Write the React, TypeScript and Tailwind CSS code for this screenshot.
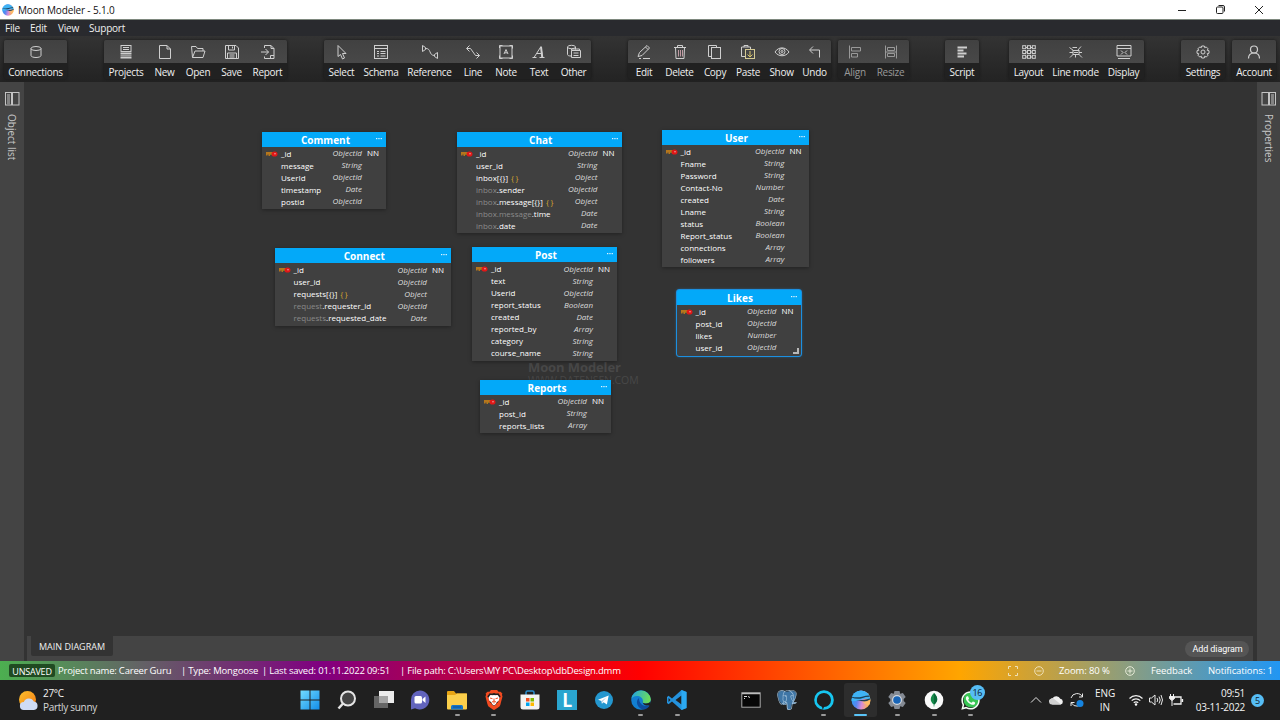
import React from "react";
import { SiPostgresql, SiBrave } from "react-icons/si";
import { FaWhatsapp } from "react-icons/fa";

type Tool = { label: string; w: string; icon: React.ReactNode };

const Ico = ({ children, size = 16 }: { children: React.ReactNode; size?: number }) => (
  <svg width={size} height={size} viewBox="0 0 16 16" fill="none" stroke="#cfcfcf" strokeWidth="1">
    {children}
  </svg>
);

const dbIcon = (
  <Ico>
    <ellipse cx="8" cy="4.5" rx="5" ry="2" />
    <path d="M3 4.5v7c0 1.1 2.2 2 5 2s5-.9 5-2v-7" />
  </Ico>
);
const projectsIcon = (
  <Ico>
    <rect x="3" y="1.500" width="10" height="6" />
    <path d="M5 3.500h6M5 5.500h6" />
    <path d="M2.500 9.500h11M2.500 13.500h11" strokeWidth="2" />
    <path d="M2.500 11.500h11" stroke="#999" />
  </Ico>
);
const newIcon = (
  <Ico>
    <path d="M2.500 1.500h7.500l3.500 3.500v9.500h-11z" />
    <path d="M10 1.500V5h3.500" />
  </Ico>
);
const openIcon = (
  <Ico>
    <path d="M2.500 13.500l-1-11h4.500l1.500 2h5.500v2.500M2.500 13.500l2.500-6.500h10l-2 6.500z" />
  </Ico>
);
const saveIcon = (
  <Ico>
    <path d="M1.500 1.500h10.500l2.500 2.500v10.500h-13zM4.500 1.500v4.500h6v-4.500M8.500 2.500v2M3.500 14.500v-5.500h9v5.500M5.500 11h5M5.500 13h5" />
  </Ico>
);
const reportIcon = (
  <Ico>
    <path d="M4.500 4v-2.500h6.500l3 3v10h-9.500v-2M11 1.500v3h3M1 8h7.500M5.500 5l3 3-3 3M10.500 11.500h3.500M10.500 11.500v3" />
  </Ico>
);
const selectIcon = (
  <Ico>
    <path d="M4 1.500v11l2.500-2 2 4.500 2-1-2-4.500h3.500z" />
  </Ico>
);
const schemaIcon = (
  <Ico>
    <rect x="1.500" y="1.500" width="13" height="13" />
    <path d="M1.500 4.500h13M4 7.500h2M7.500 7.500h5M4 9.500h2M7.500 9.500h5M4 12h2M7.500 12h5" />
  </Ico>
);
const referenceIcon = (
  <svg width="20" height="16" viewBox="0 0 20 16" fill="none" stroke="#cfcfcf">
    <path d="M2.500 1.500v6l3-2v-2zM5.500 4.500c6-.5 3 7 9 7M17.500 14.500v-6l-3 2v2z" />
  </svg>
);
const lineIcon = (
  <Ico>
    <path d="M4.500 1.500l-3 3 3 3M2 4.500h3.500l5 7h4M11.500 8.500l3 3-3 3" />
  </Ico>
);
const noteIcon = (
  <Ico>
    <rect x="2" y="2" width="12" height="12" />
    <path d="M1.500 4v-2.500h3M11.500 1.500h3v3M14.500 11.500v3h-3M4.500 14.500h-3v-3" />
    <path d="M6 10l2-4.500 2 4.500M6.800 8.800h2.400" />
  </Ico>
);
const textIcon = (
  <Ico>
    <path d="M1.500 13.500h4M8.500 13.500h5M3 13.500l7-11 1.500 11M5.800 9.500h5" />
    <path d="M10 3l1.200 10" strokeWidth="2" />
  </Ico>
);
const otherIcon = (
  <Ico>
    <ellipse cx="5.500" cy="3" rx="4" ry="1.700" />
    <path d="M1.500 3v7.500c0 1 1.500 1.500 3.500 1.500M9.500 3v2.500" />
    <path d="M5.500 6.500h9v7h-9zM5.500 6.500v-1.500h8v1.500M7.500 9h5M7.500 11.500h5" />
  </Ico>
);
const editIcon = (
  <Ico>
    <path d="M2 12.500l1.500-4 7.500-7 2.500 2.500-7.500 7.500zM9.500 3l2.500 2.500M3 14.500h2M7 14.500h7" />
  </Ico>
);
const deleteIcon = (
  <Ico>
    <path d="M2 3.500h12M5.500 3.500v-2h5v2M3.500 3.500l.5 11h8l.5-11" />
    <path d="M6.500 6v6.500M8.500 6v6.500M10.500 6v6.500" stroke="#bf9aa2" />
  </Ico>
);
const copyIcon = (
  <Ico>
    <path d="M4.500 12.500h-3v-11h8v2" />
    <rect x="4.500" y="3.500" width="9" height="11" />
  </Ico>
);
const pasteIcon = (
  <Ico>
    <path d="M5 12.500h-3.500v-9.500h9v2M4 3v-1.500h4v1.500" />
    <rect x="5.500" y="5.500" width="9" height="9" stroke="#d3c993" />
    <path d="M10 7v6M7.500 10.500l2.500 2.500 2.500-2.500" stroke="#d9c66b" />
  </Ico>
);
const showIcon = (
  <Ico>
    <path d="M1 8c3.500-5.500 10.500-5.500 14 0-3.500 5-10.500 5-14 0z" />
    <circle cx="8" cy="7.500" r="3" />
    <circle cx="8" cy="7.500" r="1" />
  </Ico>
);
const undoIcon = (
  <Ico>
    <path d="M6 2.500l-3.500 3.500 3.500 3.500M3 6h9.500v7.500" />
  </Ico>
);
const alignIcon = (
  <Ico>
    <path d="M2.500 1.500v13M4.500 3.500h9v3.500h-9zM4.500 9.500h6v3.500h-6z" stroke="#999" />
  </Ico>
);
const resizeIcon = (
  <Ico>
    <path d="M2.500 1.500v13M13.500 1.500v13M4.500 3.500h7v3h-7zM4.500 9.500h7v3h-7zM2 8h12" stroke="#999" />
  </Ico>
);
const scriptIcon = (
  <Ico>
    <path d="M3.500 3.500h9.500M3.500 6.500h6M3.500 9.500h9M3.500 12.500h6.500" strokeWidth="2" />
  </Ico>
);
const layoutIcon = (
  <Ico>
    {[1.7, 6.5, 11.3].map((y) =>
      [1.7, 6.5, 11.3].map((x) => <rect key={`${x}-${y}`} x={x} y={y} width="3" height="3" />)
    )}
    <path d="M5 3.500h1.500M9.500 3.500h2M5 8h1.500M9.500 8h2M5 13h1.500M9.500 13h2" />
  </Ico>
);
const lineModeIcon = (
  <Ico>
    <rect x="5" y="6.500" width="6" height="4" />
    <path d="M1.500 3.500l4 3M4.500 3.500h4.500M9.500 6.500l3.500-4M1.500 8.500h3.500M11 8.500h3M5 10.500l-3 3M7.500 10.500v3M11 10.500l3 3M6 8.500h4" />
  </Ico>
);
const displayIcon = (
  <Ico>
    <path d="M1 1.500h14v10.500h-14zM1 4.500h14M2 14.500h12M5 6.500l2 2-2 2M11 6.500l-2 2 2 2" />
  </Ico>
);
const settingsIcon = (
  <Ico>
    <path d="M6.700 2h2.600l.4 1.700 1.500-.8 1.900 1.900-.9 1.500 1.800.4v2.600l-1.800.4.9 1.500-1.900 1.900-1.500-.9-.4 1.800h-2.600l-.4-1.800-1.500.9-1.900-1.900.9-1.500-1.800-.4v-2.600l1.800-.4-.9-1.500 1.900-1.900 1.500.8z" />
    <circle cx="8" cy="8" r="2" />
  </Ico>
);
const accountIcon = (
  <Ico>
    <circle cx="8" cy="5.500" r="3.500" strokeWidth="1.200" />
    <path d="M2.500 14.500c0-4 2-5.500 5.500-5.500s5.500 1.500 5.500 5.500" strokeWidth="1.200" />
  </Ico>
);

const Group = ({ tools, className = "", dim = false }: { tools: Tool[]; className?: string; dim?: boolean }) => (
  <div className={`flex h-[39px] rounded-[2px] overflow-hidden shadow-[0_0_3px_#151515] ${className}`}>
    {tools.map((t) => (
      <div key={t.label} className={`flex flex-col ${t.w}`}>
        <div className="h-[23px] flex items-center justify-center bg-linear-to-b from-[#414141] to-[#484848]">{t.icon}</div>
        <div
          className={`h-4 flex items-center justify-center bg-[#212121] text-[10px] tracking-[-0.3px] leading-none whitespace-nowrap pt-[2px] ${
            dim ? "text-[#999]" : "text-[#f0f0f0]"
          }`}
        >
          {t.label}
        </div>
      </div>
    ))}
  </div>
);

type Row = [string, string, string];
type Table = { name: string; pos: string; rows: Row[]; selected?: boolean };

const tables: Table[] = [
  {
    name: "Comment",
    pos: "left-[238px] top-[49.5px] w-[124px] h-[77.5px]",
    rows: [["", "_id", "ObjectId"], ["", "message", "String"], ["", "UserId", "ObjectId"], ["", "timestamp", "Date"], ["", "postid", "ObjectId"]],
  },
  {
    name: "Chat",
    pos: "left-[433px] top-[49.5px] w-[164.5px] h-[101.5px]",
    rows: [
      ["", "_id", "ObjectId"],
      ["", "user_id", "String"],
      ["", "inbox[{}]", "Object"],
      ["inbox", ".sender", "ObjectId"],
      ["inbox", ".message[{}]", "Object"],
      ["inbox.message", ".time", "Date"],
      ["inbox", ".date", "Date"],
    ],
  },
  {
    name: "User",
    pos: "left-[637.5px] top-[47.5px] w-[147px] h-[137.5px]",
    rows: [
      ["", "_id", "ObjectId"],
      ["", "Fname", "String"],
      ["", "Password", "String"],
      ["", "Contact-No", "Number"],
      ["", "created", "Date"],
      ["", "Lname", "String"],
      ["", "status", "Boolean"],
      ["", "Report_status", "Boolean"],
      ["", "connections", "Array"],
      ["", "followers", "Array"],
    ],
  },
  {
    name: "Connect",
    pos: "left-[250.5px] top-[166px] w-[176.5px] h-[78px]",
    rows: [
      ["", "_id", "ObjectId"],
      ["", "user_id", "ObjectId"],
      ["", "requests[{}]", "Object"],
      ["request", ".requester_id", "ObjectId"],
      ["requests", ".requested_date", "Date"],
    ],
  },
  {
    name: "Post",
    pos: "left-[448px] top-[165px] w-[145px] h-[114px]",
    rows: [
      ["", "_id", "ObjectId"],
      ["", "text", "String"],
      ["", "Userid", "ObjectId"],
      ["", "report_status", "Boolean"],
      ["", "created", "Date"],
      ["", "reported_by", "Array"],
      ["", "category", "String"],
      ["", "course_name", "String"],
    ],
  },
  {
    name: "Likes",
    pos: "left-[652.5px] top-[207.5px] w-[124px] h-[66px]",
    selected: true,
    rows: [["", "_id", "ObjectId"], ["", "post_id", "ObjectId"], ["", "likes", "Number"], ["", "user_id", "ObjectId"]],
  },
  {
    name: "Reports",
    pos: "left-[456px] top-[297.5px] w-[131px] h-[53.5px]",
    rows: [["", "_id", "ObjectId"], ["", "post_id", "String"], ["", "reports_lists", "Array"]],
  },
];

const KeyIcon = () => (
  <svg width="12" height="6" viewBox="0 0 12 6">
    <path d="M0 1h7v2h-3v2h-1.500v-1.500h-1v1h-1.500z" fill="#b5761c" />
    <path d="M4 3h3v1h-3z" fill="#7c861e" />
    <ellipse cx="8.500" cy="3" rx="3" ry="2.600" fill="#e11717" />
    <circle cx="9" cy="2.700" r=".8" fill="#f0a0a0" />
  </svg>
);

const Dots = () => (
  <svg width="7" height="2" viewBox="0 0 7 2" fill="#dff3ff">
    <rect x="0" y="0" width="1.300" height="1.200" />
    <rect x="2.300" y="0" width="1.300" height="1.200" />
    <rect x="4.600" y="0" width="1.300" height="1.200" />
  </svg>
);

const TableNode = ({ t }: { t: Table }) => (
  <div
    className={`absolute ${t.pos} bg-[#404040] flex flex-col ${
      t.selected ? "rounded-[2px] outline-1 outline-[#1c8fe0] shadow-[0_0_3px_#1c8fe0]" : "shadow-[0_1px_4px_rgba(0,0,0,0.35)]"
    }`}
  >
    <div className="h-[15px] mb-px shrink-0 bg-[#03a9f9] flex items-center text-white font-bold text-[10px] leading-none">
      <span className="w-3" />
      <span className="flex-1 text-center pt-px pl-[2px]">{t.name}</span>
      <span className="w-[11px] pb-[1px] pl-[1px]">
        <Dots />
      </span>
    </div>
    {t.rows.map(([prefix, field, type], i) => (
      <div key={i} className="h-3 shrink-0 flex items-center text-[8px] leading-[12px] text-white whitespace-nowrap pr-[7px]">
        <span className="w-[19px] pl-1 shrink-0">{i === 0 && <KeyIcon />}</span>
        <span className="flex-1 w-0">
          <span className="text-[#8a8a8a]">{prefix}</span>
          {field}
          {field.includes("[{}]") && <span className="text-[#d9a62e] ml-[3px] tracking-[1.500px]">{"{}"}</span>}
        </span>
        <span className="italic text-[8px] text-[#dcdcdc] pb-px">{type}</span>
        <span className="w-[17px] text-right pb-px">{i === 0 ? "NN" : ""}</span>
      </div>
    ))}
    {t.selected && <span className="absolute right-[2px] bottom-[2px] w-[6px] h-[6px] border-r-2 border-b-2 border-[#b8b8b8]" />}
  </div>
);

const PanelIcon = ({ flip = false }: { flip?: boolean }) => (
  <svg width="15" height="14" viewBox="0 0 15 14" fill="none" stroke="#c4c4c4" className={flip ? "-scale-x-100" : ""}>
    <rect x=".5" y=".5" width="13.500" height="12.500" />
    <path d="M6.500 .5v12.500M7.500 .5v12.500M2 3h3M2 5h3M2 7h3M2 9h3M2 11h3" />
  </svg>
);

const MoonLogo = ({ id, size }: { id: string; size: number }) => (
  <svg width={size} height={size} viewBox="0 0 20 20">
    <defs>
      <linearGradient id={id} x1="0" y1=".55" x2="1" y2=".75">
        <stop offset="0" stopColor="#2a9df4" />
        <stop offset=".3" stopColor="#5b86f0" />
        <stop offset=".55" stopColor="#d98cd6" />
        <stop offset=".85" stopColor="#ffb257" />
      </linearGradient>
      <clipPath id={`${id}-clip`}>
        <circle cx="10" cy="10" r="9.500" />
      </clipPath>
    </defs>
    <g clipPath={`url(#${id}-clip)`}>
      <path d="M0 0h20v20H0z" fill={`url(#${id})`} />
      <path d="M0 0h20v9.500q-5-1.500-10 .3T0 11z" fill="#3fb3f5" />
      <path d="M0 6.500q6 1.600 11 .2t7-1.200l2 .3v1q-5-.2-9 1.400T0 7.600z" fill="#1d4058" />
      <path d="M5 10.200q7 .6 15-2v1.300q-5 3-8.500 1.800z" fill="#1d4058" />
      <path d="M11 11.500q4 .5 9-2.500l-1 6q-4 1-8-3.500z" fill="#ffc26b" opacity=".7" />
    </g>
  </svg>
);

const taskIcons: { icon: React.ReactNode; dot?: "on" | "active"; badge?: string }[] = [
  {
    icon: (
      <svg width="20" height="20" viewBox="0 0 20 20">
        <defs>
          <linearGradient id="win" x1="0" y1="0" x2="1" y2="1">
            <stop stopColor="#72dcff" />
            <stop offset="1" stopColor="#128ce8" />
          </linearGradient>
        </defs>
        <path d="M.5 .5h9v9h-9zM10.500 .5h9v9h-9zM.5 10.500h9v9h-9zM10.500 10.500h9v9h-9z" fill="url(#win)" />
      </svg>
    ),
  },
  {
    icon: (
      <svg width="20" height="20" viewBox="0 0 20 20" fill="#444" stroke="#e4e4e4" strokeWidth="2">
        <circle cx="11" cy="8.500" r="7" />
        <path d="M6 13.500l-4.500 5" strokeWidth="2.500" />
      </svg>
    ),
  },
  {
    icon: (
      <svg width="20" height="20" viewBox="0 0 20 20">
        <path d="M5 1h15v12h-15z" fill="#ececec" />
        <path d="M0 6h14v12h-14z" fill="#6d6d6d" opacity=".9" />
        <path d="M5 6h9v7h-9z" fill="#a5a5a5" />
      </svg>
    ),
  },
  {
    icon: (
      <svg width="20" height="20" viewBox="0 0 20 20">
        <path d="M10 .5a9.500 9.500 0 1 1-5 17.700l-4 1.300v-9.500a9.200 9.200 0 0 1 9-9.500z" fill="#6264bd" />
        <rect x="4.500" y="6" width="7.500" height="7.500" rx="1.500" fill="#fff" />
        <path d="M12.500 9l3-2.500v6.500l-3-2.500z" fill="#fff" />
      </svg>
    ),
  },
  {
    dot: "on",
    icon: (
      <svg width="20" height="20" viewBox="0 0 20 20">
        <path d="M0 2q0-1 1-1h6l2 2.500h10q1 0 1 1v4H0z" fill="#e8a514" />
        <path d="M0 5h8l2-1.500h10v15q0 1-1 1H1q-1 0-1-1z" fill="#fbcf4b" />
        <path d="M4 19.500v-3q0-1.500 1.500-1.500h9q1.500 0 1.500 1.500v3z" fill="#1575c7" />
        <path d="M6 17h8" stroke="#0d4f91" />
      </svg>
    ),
  },
  {
    dot: "on",
    icon: (
      <span className="relative flex items-center justify-center">
        <SiBrave size={20} color="#f24a20" />
        <svg className="absolute" width="14" height="14" viewBox="0 0 14 14">
          <path d="M3.500 2l2 .3L7 2l1.500.3 2-.3 2 2.500-.7 3-2.800 2.500v1L7 12.500 5 11v-1L2.200 7.500l-.7-3z" fill="#fff" />
          <path d="M3 5l2.500.7M11 5l-2.500.7M7 5.500v3M5 9l2-1 2 1M7 9v1.500" stroke="#f24a20" fill="none" />
        </svg>
      </span>
    ),
  },
  {
    icon: (
      <svg width="20" height="20" viewBox="0 0 20 20">
        <path d="M6 5v-2.500q0-1.500 1.500-1.500h5q1.500 0 1.500 1.500V5" fill="none" stroke="#2b8fd0" strokeWidth="1.500" />
        <path d="M.5 4.500h19v12.500q0 2.500-2.500 2.500H3q-2.500 0-2.500-2.500z" fill="#f3f3f3" />
        <path d="M6 8h3.500v3.500H6z" fill="#f25022" />
        <path d="M10.500 8H14v3.500h-3.500z" fill="#7fba00" />
        <path d="M6 12.500h3.500V16H6z" fill="#00a4ef" />
        <path d="M10.500 12.500H14V16h-3.500z" fill="#ffb900" />
      </svg>
    ),
  },
  {
    icon: (
      <span className="w-5 h-5 bg-[#2aa5cf] text-white font-black text-[18px] leading-[20px] text-center font-['Lato',sans-serif]">L</span>
    ),
  },
  {
    icon: (
      <svg width="20" height="20" viewBox="0 0 20 20">
        <circle cx="10" cy="10" r="9" fill="#2497cf" />
        <path d="M4 9.800l10.700-4.300-1.800 9-3.300-2.300-1.700 1.600-.4-2.800z" fill="#fff" />
        <path d="M7.500 11l5-3.700-3.800 4.300-.8 2z" fill="#a9cbe2" />
      </svg>
    ),
  },
  {
    dot: "on",
    icon: (
      <svg width="20" height="20" viewBox="0 0 20 20">
        <defs>
          <linearGradient id="edge" x1="0" y1="0" x2="1" y2=".2">
            <stop stopColor="#1ea1e6" />
            <stop offset="1" stopColor="#6bdc5b" />
          </linearGradient>
        </defs>
        <circle cx="10" cy="10" r="9.800" fill="#127fd2" />
        <path d="M.2 9A9.900 9.900 0 0 1 19.800 9c.3 3-2 4.500-5 4.500-2.800 0-3.800-1-2.800-2.500C12 8 9 6 6 6 3 6 1 7.500.2 9z" fill="url(#edge)" />
        <path d="M8 8c-4 3-2 10 4 11.500 3 0 5.500-1.800 6.800-4-5 2-11-1-10.800-7.500z" fill="#0d4d9e" />
        <path d="M12 11c-1 1.500 0 2.500 2.800 2.500 2 0 4-.7 4.700-2v3.500c-5 1.500-8.500-.5-7.500-4z" fill="#202020" />
      </svg>
    ),
  },
  {
    dot: "on",
    icon: (
      <svg width="20" height="20" viewBox="0 0 20 20">
        <path d="M14.500 0l5 2v16l-5 2L5 11.500l-3.500 2.700L0 13V7l1.500-1.200L5 8.500zM14.500 5.500L8.500 10l6 4.500zM1.500 8v4l2-2z" fill="#2492dd" fillRule="evenodd" />
        <path d="M14.500 0l5 2v16l-5 2z" fill="#2ba9f2" />
      </svg>
    ),
  },
  { icon: null },
  {
    icon: (
      <svg width="20" height="20" viewBox="0 0 20 20">
        <rect x=".8" y="2.800" width="18.400" height="14.400" fill="#060606" stroke="#a8a8a8" />
        <path d="M1 3.500h18" stroke="#bcbcbc" strokeWidth="1.500" />
        <path d="M3 6.500h3M7 6.500l2 1M3 8.500h1" stroke="#ddd" />
      </svg>
    ),
  },
  {
    icon: (
      <span className="relative flex items-center justify-center">
        <svg className="absolute" width="20" height="20" viewBox="0 0 20 20" fill="#3f76a6">
          <path d="M1 5q0-4 4-4l5 .5 5-.5q4.500 0 4 4-.5 4-2.500 7l2 .5q-1 2-4 2l-1 5h-3.500v-6l-4 1.500Q1.500 12 1 5z" />
        </svg>
        <SiPostgresql size={20} color="#a9c6dd" className="relative" />
      </span>
    ),
  },
  {
    dot: "on",
    icon: (
      <svg width="20" height="20" viewBox="0 0 20 20">
        <circle cx="10" cy="10" r="9.800" fill="#17c6f0" />
        <path d="M10 3a7 7 0 0 1 0 14q-.5 1.500-1.500 2.700 0-2.500-.7-3A7 7 0 0 1 10 3z" fill="#202020" />
      </svg>
    ),
  },
  { dot: "active", icon: <MoonLogo id="moonTask" size={20} /> },
  {
    dot: "on",
    icon: (
      <svg width="20" height="20" viewBox="0 0 20 20">
        <path d="M7.500 1h5l.7 2.700 2.700-.8 2.800 4-2 2.100v2l2 2.100-2.800 4-2.700-.8-.7 2.700h-5l-.7-2.700-2.700.8-2.800-4 2-2.100V9l-2-2.100 2.800-4 2.700.8z" fill="#858b94" />
        <circle cx="10" cy="10" r="5" fill="#d2d7df" />
        <circle cx="10" cy="10" r="3.800" fill="#1764b7" />
      </svg>
    ),
  },
  {
    dot: "on",
    icon: (
      <svg width="20" height="20" viewBox="0 0 20 20">
        <circle cx="10" cy="10" r="9.300" fill="#fafafa" />
        <path d="M10 3c4 4 4.500 8 .3 11.500V16.500h-.6v-2C5.500 11 6 7 10 3z" fill="#168a4b" />
        <path d="M10 3c4 4 4.500 8 .3 11.500H10z" fill="#0b6b3b" />
      </svg>
    ),
  },
  {
    dot: "on",
    badge: "16",
    icon: (
      <span className="relative flex items-center justify-center">
        <svg className="absolute" width="18" height="18" viewBox="0 0 18 18">
          <circle cx="9.300" cy="8.700" r="7.800" fill="#37c653" />
        </svg>
        <FaWhatsapp size={21} color="#f4fff5" className="relative" />
      </span>
    ),
  },
];

export default function App() {
  return (
    <div className="w-[1280px] h-[720px] overflow-hidden flex flex-col bg-[#333] font-['Open_Sans',sans-serif]">
      <header className="h-5 shrink-0 bg-white border-b border-[#7e887e] flex items-center">
        <div className="pl-[2px]">
          <MoonLogo id="moonTitle" size={12} />
        </div>
        <span className="pl-1 text-[10px] tracking-[-0.15px] text-[#111] leading-none">Moon Modeler - 5.1.0</span>
        <div className="ml-auto flex items-center gap-[30px] pr-[17.500px]">
          <svg width="8" height="8" viewBox="0 0 8 8" stroke="#222"><path d="M0 4.500h8" /></svg>
          <svg width="9" height="9" viewBox="0 0 9 9" fill="none" stroke="#222">
            <rect x=".5" y="2" width="6.500" height="6.500" rx="1" />
            <path d="M2.500 .5h4.500q1.500 0 1.500 1.500v4.500" />
          </svg>
          <svg width="8" height="8" viewBox="0 0 8 8" stroke="#222"><path d="M0 0l8 8M8 0l-8 8" /></svg>
        </div>
      </header>

      <nav className="h-4 shrink-0 bg-[#292a2e] flex items-center text-[10px] tracking-[-0.2px] leading-none text-[#f0f0f0] pl-[5px]">
        <span className="w-[25px]">File</span>
        <span className="w-7">Edit</span>
        <span className="w-[31px]">View</span>
        <span>Support</span>
      </nav>

      <div className="h-[46px] shrink-0 bg-linear-to-b from-[#333] to-[#232323] pt-1 pl-1 flex">
        <Group tools={[{ label: "Connections", w: "w-[63px]", icon: dbIcon }]} />
        <Group
          className="ml-[37px]"
          tools={[
            { label: "Projects", w: "w-[44px]", icon: projectsIcon },
            { label: "New", w: "w-[33px]", icon: newIcon },
            { label: "Open", w: "w-[34px]", icon: openIcon },
            { label: "Save", w: "w-[33px]", icon: saveIcon },
            { label: "Report", w: "w-[39px]", icon: reportIcon },
          ]}
        />
        <Group
          className="ml-[37px]"
          tools={[
            { label: "Select", w: "w-[35px]", icon: selectIcon },
            { label: "Schema", w: "w-[44px]", icon: schemaIcon },
            { label: "Reference", w: "w-[53px]", icon: referenceIcon },
            { label: "Line", w: "w-[34px]", icon: lineIcon },
            { label: "Note", w: "w-[32px]", icon: noteIcon },
            { label: "Text", w: "w-[34px]", icon: textIcon },
            { label: "Other", w: "w-[35px]", icon: otherIcon },
          ]}
        />
        <Group
          className="ml-[37px]"
          tools={[
            { label: "Edit", w: "w-[32px]", icon: editIcon },
            { label: "Delete", w: "w-[39px]", icon: deleteIcon },
            { label: "Copy", w: "w-[32px]", icon: copyIcon },
            { label: "Paste", w: "w-[34px]", icon: pasteIcon },
            { label: "Show", w: "w-[33px]", icon: showIcon },
            { label: "Undo", w: "w-[33px]", icon: undoIcon },
          ]}
        />
        <Group
          className="ml-[7px]"
          dim
          tools={[
            { label: "Align", w: "w-[34px]", icon: alignIcon },
            { label: "Resize", w: "w-[37px]", icon: resizeIcon },
          ]}
        />
        <Group className="ml-[36px]" tools={[{ label: "Script", w: "w-[34px]", icon: scriptIcon }]} />
        <Group
          className="ml-[30px]"
          tools={[
            { label: "Layout", w: "w-[39px]", icon: layoutIcon },
            { label: "Line mode", w: "w-[55px]", icon: lineModeIcon },
            { label: "Display", w: "w-[41px]", icon: displayIcon },
          ]}
        />
        <Group className="ml-[37px]" tools={[{ label: "Settings", w: "w-[44px]", icon: settingsIcon }]} />
        <Group className="ml-[7px]" tools={[{ label: "Account", w: "w-[44px]", icon: accountIcon }]} />
      </div>

      <div className="flex-1 min-h-0 flex">
        <aside className="w-6 shrink-0 bg-[#444] flex flex-col items-center pt-[10px] text-[10px] text-[#c8c8c8]">
          <PanelIcon />
          <span className="mt-2 leading-[14px] [writing-mode:vertical-rl]">Object list</span>
        </aside>
        <main className="flex-1 flex flex-col min-w-0 bg-[#333]">
          <div className="relative flex-1">
            <div className="absolute left-[504px] top-[278px] text-[#484848] leading-[14px] whitespace-nowrap">
              <div className="font-bold text-[13px] tracking-[-0.1px]">Moon Modeler</div>
              <div className="text-[10.500px] tracking-[-0.1px] leading-[13px]">WWW.DATENSEN.COM</div>
            </div>
            {tables.map((t) => (
              <TableNode key={t.name} t={t} />
            ))}
          </div>
          <div className="h-[25px] ml-[3px] mr-1 bg-[#444] flex items-start justify-between text-[9px] text-[#f0f0f0] pl-1 pr-[4px]">
            <div className="w-[82px] h-5 bg-[#333] flex items-center justify-center whitespace-nowrap pt-[2px] rounded-b-[2px]">MAIN DIAGRAM</div>
            <div className="mt-[5px] w-[64px] h-4 rounded-full bg-[#555] flex items-center justify-center whitespace-nowrap pt-px pl-px tracking-[-0.1px] text-white font-['Roboto',sans-serif]">
              Add diagram
            </div>
          </div>
        </main>
        <aside className="w-[23px] shrink-0 bg-[#444] flex flex-col items-center pt-[10px] text-[10px] text-[#c8c8c8]">
          <PanelIcon flip />
          <span className="mt-2 leading-[14px] [writing-mode:vertical-rl]">Properties</span>
        </aside>
      </div>

      <div className="h-[19px] shrink-0 flex items-center text-[9.500px] tracking-[-0.2px] leading-none text-white bg-[linear-gradient(90deg,#4caf50_0%,#800080_25%,#ff0000_50%,#ffa500_75%,#2196f3_100%)] whitespace-pre">
        <span className="ml-[9px] w-[46px] h-[13px] rounded-[2px] bg-[#204a22] flex items-center justify-center text-[9px] pt-px">UNSAVED</span>
        <span className="ml-[3px] w-[123px]">Project name: Career Guru</span>
        <span className="w-[81px]">| Type: Mongoose</span>
        <span className="w-[138px]">| Last saved: 01.11.2022 09:51</span>
        <span>| File path: C:\Users\MY PC\Desktop\dbDesign.dmm</span>
        <div className="ml-auto flex items-center pr-[8px] tracking-[-0.1px]">
          <svg width="10" height="10" viewBox="0 0 10 10" fill="none" stroke="#eee0b8">
            <path d="M.5 3v-2.500h2.500M7 .5h2.500v2.500M9.500 7v2.500h-2.500M3 9.500h-2.500v-2.500" />
          </svg>
          <svg className="ml-4" width="10" height="10" viewBox="0 0 10 10" fill="none" stroke="#eee0b8">
            <circle cx="5" cy="5" r="4.300" /><path d="M2.500 5h5" />
          </svg>
          <span className="ml-[15px] w-[51px]">Zoom: 80 %</span>
          <svg className="ml-[15px]" width="10" height="10" viewBox="0 0 10 10" fill="none" stroke="#e6ead8">
            <circle cx="5" cy="5" r="4.300" /><path d="M2.500 5h5M5 2.500v5" />
          </svg>
          <span className="ml-4 w-[41px]">Feedback</span>
          <span className="ml-4 w-[64px]">Notifications: 1</span>
        </div>
      </div>

      <footer className="h-10 shrink-0 bg-[#202020] flex items-center text-[#f4f4f4] text-[10px] tracking-[-0.3px]">
        <div className="w-[292px] flex items-center pl-[18px] gap-1">
          <svg width="21" height="21" viewBox="0 0 21 21">
            <defs>
              <linearGradient id="sun" x1="0" y1="0" x2="1" y2="1">
                <stop stopColor="#fbc02d" />
                <stop offset="1" stopColor="#f57c14" />
              </linearGradient>
            </defs>
            <circle cx="9.500" cy="9.500" r="8.500" fill="url(#sun)" />
            <path d="M6 20a4 4 0 0 1-.2-8 5.500 5.500 0 0 1 10-.5A4.300 4.300 0 0 1 16 20z" fill="#cfdcf5" />
          </svg>
          <div className="leading-[13.500px] pt-px">
            <div>27°C</div>
            <div className="text-[#d6d6d6]">Partly sunny</div>
          </div>
        </div>
        <div className="flex w-[697px] h-full">
          {taskIcons.map((t, i) => (
            <div key={i} className="flex-1 relative flex items-center justify-center">
              <div className={`w-[33px] h-[34px] flex items-center justify-center rounded-[3px] ${t.dot === "active" ? "bg-[#2d2d2d]" : ""}`}>{t.icon}</div>
              {t.dot && (
                <span
                  className={`absolute bottom-[4px] rounded-full ${t.dot === "active" ? "w-[13px] h-[2px] bg-[#5ac4f7]" : "w-[5px] h-[2px] bg-[#9a9a9a]"}`}
                />
              )}
              {t.badge && (
                <span className="absolute left-[17.500px] top-[5px] w-[15px] h-[15px] rounded-full bg-[#56bdf5] text-[#10202c] text-[9px] leading-[15px] text-center">
                  {t.badge}
                </span>
              )}
            </div>
          ))}
        </div>
        <div className="ml-auto flex items-center pr-4">
          <svg width="12" height="8" viewBox="0 0 12 8" fill="none" stroke="#e4e4e4"><path d="M1 6.500l5-5 5 5" /></svg>
          <svg className="ml-[7px]" width="15" height="10" viewBox="0 0 15 10">
            <path d="M3.500 9.500a3.200 3.200 0 0 1 0-6.300 4.500 4.500 0 0 1 7.800.5 3 3 0 0 1 .5 5.800z" fill="#f0f0f0" />
            <path d="M4 3l8 6.500h-8.500a3 3 0 0 1-1-6z" fill="#d0d0d0" />
          </svg>
          <svg className="ml-[5px]" width="16" height="16" viewBox="0 0 16 16" fill="none" stroke="#e8e8e8">
            <path d="M2 6a6.200 6.200 0 0 1 11.500-1M13.500 1.500v3.500h-3.500M13.500 10a6 6 0 0 1-11 1M2 14v-3.500h3.500" />
            <circle cx="11" cy="11.500" r="3.500" fill="#1684e0" stroke="none" />
          </svg>
          <div className="ml-[10px] w-5 text-center leading-[13.500px] whitespace-nowrap pt-px tracking-normal">ENG<br />IN</div>
          <svg className="ml-[14px]" width="14" height="12" viewBox="0 0 14 12" fill="none" stroke="#f0f0f0">
            <path d="M.5 4.500a9 9 0 0 1 13 0M2.700 6.700a6 6 0 0 1 8.600 0M4.800 8.800a3 3 0 0 1 4.400 0" strokeWidth="1.200" />
            <circle cx="7" cy="10.500" r="1.200" fill="#fff" stroke="none" />
          </svg>
          <svg className="ml-[6px]" width="14" height="12" viewBox="0 0 14 12" fill="none" stroke="#e8e8e8">
            <path d="M.5 4h2l3.500-3v10l-3.500-3h-2zM8 4q1.500 2 0 4M10 2.500q2.500 3.500 0 7M12 1q3 5 0 10" />
          </svg>
          <svg className="ml-[6px]" width="15" height="12" viewBox="0 0 15 12" fill="none" stroke="#f0f0f0">
            <path d="M6 3h6v7h-7.500M13.500 5v3" strokeWidth="1.300" />
            <path d="M1.500 0v3M4.500 0v3M3 6v6" />
            <path d="M.5 2.500h5v2l-2.500 2-2.500-2z" fill="#f0f0f0" />
          </svg>
          <div className="ml-[11px] w-[50px] text-right leading-[13.500px] whitespace-nowrap pt-px">09:51<br />03-11-2022</div>
          <span className="ml-[6px] w-[13px] h-[13px] rounded-full bg-[#56bdf5] text-[#10202c] text-[9px] leading-[13px] text-center">5</span>
        </div>
      </footer>
    </div>
  );
}
